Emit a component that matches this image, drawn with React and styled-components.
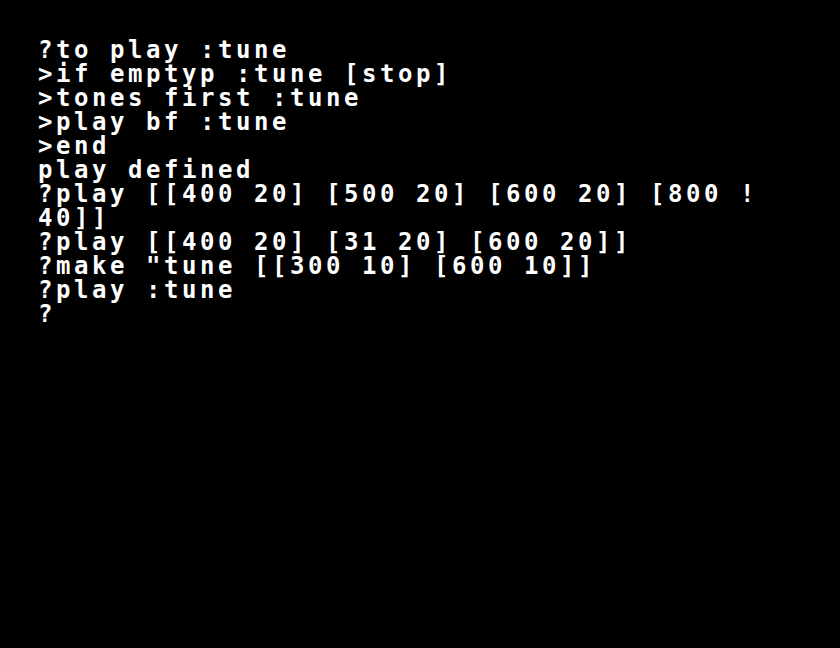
import React from 'react'
import styled, { createGlobalStyle } from 'styled-components'

const GlobalStyle = createGlobalStyle`
  html, body {
    margin: 0;
    padding: 0;
    background: #000;
  }
`

const lines = [
  '?to play :tune',
  '>if emptyp :tune [stop]',
  '>tones first :tune',
  '>play bf :tune',
  '>end',
  'play defined',
  '?play [[400 20] [500 20] [600 20] [800 !',
  '40]]',
  '?play [[400 20] [31 20] [600 20]]',
  '?make "tune [[300 10] [600 10]]',
  '?play :tune',
  '?',
]

function App () {
  return (
    <>
      <GlobalStyle />
      <Screen>
        {lines.map((text, i) => (
          <Line key={i}>{text}</Line>
        ))}
      </Screen>
    </>
  )
}

export default App

// 40 columns of 18px, rows of 24px, like the old text screen
const Screen = styled.main`
  width: 840px;
  height: 648px;
  box-sizing: border-box;
  padding: 38px 0 0 38px;
  background: #000;
  overflow: hidden;
`

const Line = styled.div`
  height: 24px;
  line-height: 24px;
  font-family: "DejaVu Sans Mono", "Liberation Mono", monospace;
  font-size: 24px;
  font-weight: bold;
  letter-spacing: 3.55px;
  color: #fff;
  white-space: pre;
`
